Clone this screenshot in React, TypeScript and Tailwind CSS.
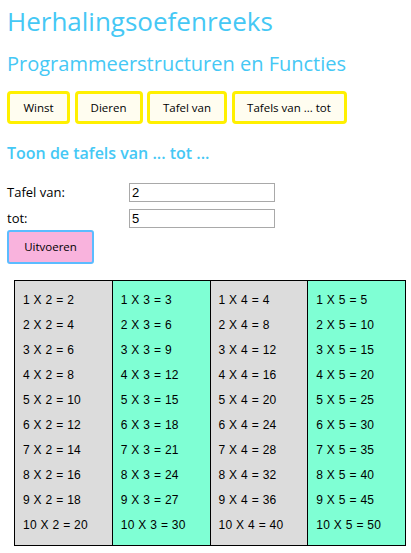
const menu = [
  { label: "Winst", w: "w-[63px]" },
  { label: "Dieren", w: "w-[68px]" },
  { label: "Tafel van", w: "w-[80px]" },
  { label: "Tafels van ... tot", w: "w-[115px]" },
];
const tafels = [2, 3, 4, 5];

export default function App() {
  return (
    <div className="bg-white min-h-screen px-[7px] pt-[2px] text-black" style={{ fontFamily: '"Open Sans", sans-serif' }}>
      <h1 className="text-[26px] leading-[38px] text-[#45c8f5]">Herhalingsoefenreeks</h1>
      <h2 className="mt-[10px] text-[20px] leading-[28px] text-[#45c8f5]">Programmeerstructuren en Functies</h2>

      <div className="mt-[13px] flex gap-[4.5px]">
        {menu.map((m) => (
          <button
            key={m.label}
            className={`h-[33px] ${m.w} rounded-[4px] border-[3px] border-[#fff000] bg-[#fffdf0] text-[11.5px]`}
          >
            {m.label}
          </button>
        ))}
      </div>

      <h3 className="mt-[17px] text-[16px] leading-[24px] font-semibold text-[#45c8f5]">Toon de tafels van ... tot ...</h3>

      <div className="mt-[18px] flex flex-col gap-[6px] text-[13px]">
        <div className="flex items-center">
          <label className="w-[122px]">Tafel van:</label>
          <input defaultValue="2" className="w-[146px] h-[19px] border border-[#a9a9a9] px-[2px] text-[13px] outline-none" style={{ fontFamily: '"Liberation Sans", sans-serif' }} />
        </div>
        <div className="flex items-center">
          <label className="w-[122px]">tot:</label>
          <input defaultValue="5" className="w-[146px] h-[19px] border border-[#a9a9a9] px-[2px] text-[13px] outline-none" style={{ fontFamily: '"Liberation Sans", sans-serif' }} />
        </div>
      </div>

      <button className="mt-[2px] h-[34px] w-[87px] rounded-[3px] border-2 border-[#5bbcff] bg-[#f9b3dd] text-[11.5px]">
        Uitvoeren
      </button>

      <div className="mt-[16px] ml-[7px] flex w-[392px] border-l border-black" style={{ fontFamily: '"Liberation Sans", sans-serif' }}>
        {tafels.map((t, i) => (
          <div
            key={t}
            className={`flex-1 flex flex-col border-y border-r border-black py-[7px] pl-[8px] text-[12px] leading-[25px] tracking-[0.3px] ${i % 2 === 0 ? "bg-[#dcdcdc]" : "bg-[#7fffd4]"}`}
          >
            {Array.from({ length: 10 }, (_, k) => (
              <div key={k}>
                {k + 1} X {t} = {(k + 1) * t}
              </div>
            ))}
          </div>
        ))}
      </div>
    </div>
  );
}
